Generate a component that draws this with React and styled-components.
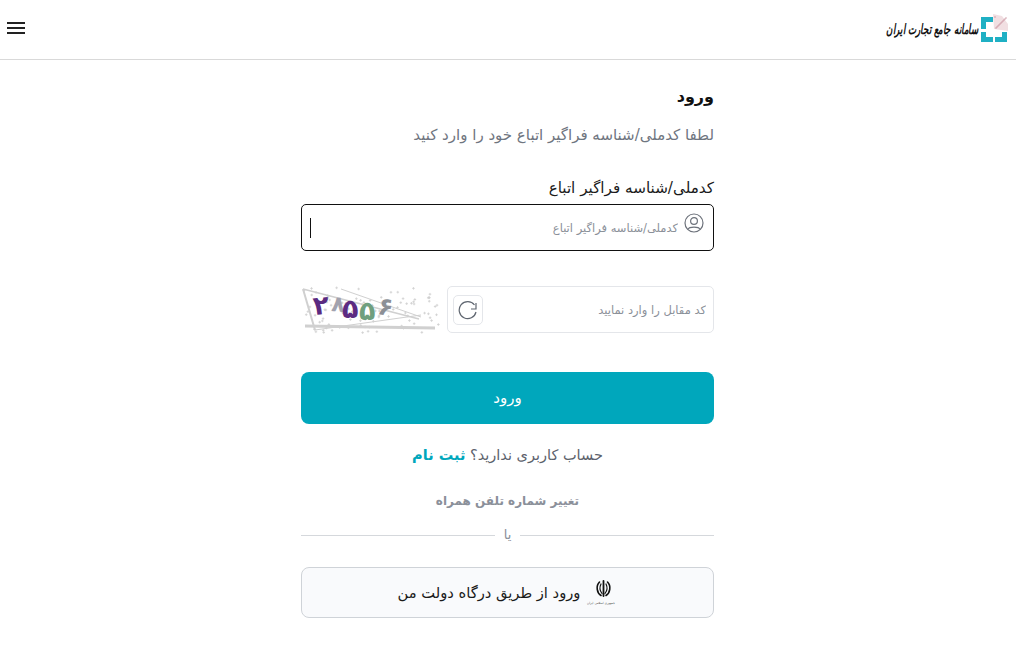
import React from 'react';
import styled, { createGlobalStyle } from 'styled-components';

const GlobalStyle = createGlobalStyle`
  html, body { margin: 0; padding: 0; background: #fff; }
  body { font-family: "DejaVu Sans", "Noto Sans", sans-serif; }
`;

const TEAL = '#00a7bc';

const hash = (n) => {
  const v = Math.sin(n * 12.9898) * 43758.5453;
  return v - Math.floor(v);
};

// pseudo random plus marks for the captcha noise
const noise = Array.from({ length: 110 }, (_, i) => ({
  x: 3 + hash(i + 1) * 135,
  y: 2 + hash(i + 200) * 46,
}));

const digits = [
  { ch: '۲', x: 13, y: 30, size: 26, fill: '#5a2a80', rot: -6 },
  { ch: '۸', x: 30, y: 26, size: 22, fill: '#a2a2ae', rot: 4 },
  { ch: '۵', x: 41, y: 33, size: 27, fill: '#5c2b82', rot: 0 },
  { ch: '۵', x: 58, y: 35, size: 27, fill: '#6f9f7e', rot: 0 },
  { ch: '۶', x: 76, y: 29, size: 25, fill: '#8c9096', rot: 8 },
];

const Page = styled.div`
  width: 1016px;
  height: 662px;
  overflow: hidden;
  display: flex;
  flex-direction: column;
  direction: rtl;
`;

const Header = styled.header`
  height: 59px;
  flex: none;
  display: flex;
  align-items: center;
  justify-content: space-between;
  border-bottom: 1px solid #d9d9d9;
  padding: 0 7px;
`;

const Brand = styled.div`
  display: flex;
  align-items: center;
  gap: 1px;
  margin-top: -1px;
`;

const BrandName = styled.span`
  display: block;
  width: 92px;
  font-family: "DejaVu Serif", serif;
  font-size: 14px;
  font-style: italic;
  font-weight: 700;
  line-height: 24px;
  color: #111;
  white-space: nowrap;
  transform: scaleX(0.62);
  transform-origin: right center;
`;

const MenuButton = styled.button`
  border: 0;
  background: none;
  padding: 0;
  width: 18px;
  height: 12px;
  margin-top: -3px;
  display: flex;
  flex-direction: column;
  justify-content: space-between;
  span { display: block; height: 2px; background: #222; }
`;

const Form = styled.main`
  width: 413px;
  margin: 0 302px 0 auto;
  display: flex;
  flex-direction: column;
`;

const Title = styled.h1`
  margin: 25px 0 0;
  font-size: 16px;
  line-height: 24px;
  font-weight: 700;
  color: #111;
`;

const Subtitle = styled.p`
  margin: 16px 0 0;
  font-size: 15px;
  line-height: 20px;
  color: #6f7580;
`;

const Label = styled.label`
  margin-top: 33px;
  font-size: 15.2px;
  line-height: 20px;
  color: #1a1a1a;
`;

const InputBox = styled.div`
  position: relative;
  margin-top: 6px;
  height: 47px;
  box-sizing: border-box;
  border: 1px solid #111;
  border-radius: 5px;
  display: flex;
  align-items: center;
  gap: 6px;
  padding: 0 9px 0 0;
`;

const UserIcon = styled.svg`
  flex: none;
  margin-top: -9px;
`;

const Field = styled.input`
  flex: 1;
  min-width: 0;
  border: 0;
  outline: 0;
  background: none;
  font: inherit;
  font-size: 11.5px;
  padding: 0;
  direction: rtl;
  &::placeholder { color: #8b9099; opacity: 1; }
`;

const Caret = styled.i`
  position: absolute;
  left: 8px;
  top: 13px;
  width: 1px;
  height: 20px;
  background: #111;
`;

const CaptchaRow = styled.div`
  margin-top: 35px;
  display: flex;
  gap: 6px;
`;

const CaptchaInput = styled.div`
  flex: 1;
  height: 47px;
  box-sizing: border-box;
  border: 1px solid #e4e6ea;
  border-radius: 5px;
  display: flex;
  align-items: center;
  padding: 0 7px 0 5px;
  gap: 6px;
`;

const RefreshButton = styled.button`
  width: 30px;
  height: 30px;
  flex: none;
  border: 1px solid #e4e6ea;
  border-radius: 5px;
  background: #fff;
  padding: 0;
  display: flex;
  align-items: center;
  justify-content: center;
`;

const Captcha = styled.svg`
  width: 140px;
  height: 50px;
  flex: none;
  margin-top: -1px;
`;

const Submit = styled.button`
  margin-top: 37px;
  height: 52px;
  border: 0;
  border-radius: 8px;
  background: ${TEAL};
  color: #fff;
  font: inherit;
  font-size: 15px;
  font-weight: 500;
`;

const SignupLine = styled.p`
  margin: 21px 0 0;
  text-align: center;
  font-size: 14.5px;
  line-height: 20px;
  color: #5c626c;
  a { color: ${TEAL}; font-weight: 700; text-decoration: none; }
`;

const ChangePhone = styled.a`
  margin-top: 27px;
  text-align: center;
  font-size: 12px;
  line-height: 18px;
  font-weight: 700;
  color: #8b909a;
`;

const Divider = styled.div`
  margin-top: 16px;
  display: flex;
  align-items: center;
  gap: 9px;
  font-size: 13px;
  line-height: 18px;
  color: #8b909a;
  &::before, &::after { content: ""; flex: 1; height: 1px; background: #d5d8dc; }
`;

const GovButton = styled.button`
  margin-top: 23px;
  height: 51px;
  border: 1px solid #cfd3d8;
  border-radius: 8px;
  background: #f9fafc;
  color: #1a1a1a;
  font: inherit;
  font-size: 14.7px;
  display: flex;
  align-items: center;
  justify-content: center;
`;

const BrandMark = () => (
  <svg width="30" height="30" viewBox="0 0 30 30">
    <path d="M14 0 L23 2 L29 10 L29 17 L15 15 Z" fill="#f1dfe2" />
    <g fill="#c58c9a">
      {[0, 1, 2, 3, 4, 5, 6, 7, 8, 9, 10, 11].map((i) => (
        <circle key={i} cx={16 + (i * 7) % 12} cy={3 + (i * 5) % 12} r="0.7" />
      ))}
    </g>
    <path d="M2 3 H14 V8 H7 V15 H2 Z M2 18 H7 V23 H14 V28 H2 Z M28 18 V28 H16 V23 H23 V18 Z" fill="#1fb0c4" />
  </svg>
);

const Emblem = () => (
  <svg width="37" height="30" viewBox="0 0 37 30">
    <g fill="none" stroke="#111" strokeLinecap="round">
      <path d="M23.5 3 V18" strokeWidth="1.8" />
      <path d="M21 6 C19.5 9 20 13 22 15.5" strokeWidth="1.2" />
      <path d="M26 6 C27.5 9 27 13 25 15.5" strokeWidth="1.2" />
      <path d="M19.5 4 C15.5 8 17 15 21 17.5" strokeWidth="1.6" />
      <path d="M27.5 4 C31.5 8 30 15 26 17.5" strokeWidth="1.6" />
    </g>
    <text x="21" y="26" textAnchor="middle" direction="rtl" fontFamily="DejaVu Sans" fontSize="3" fill="#444">
      جمهوری اسلامی ایران
    </text>
  </svg>
);

const App = () => (
  <>
    <GlobalStyle />
    <Page>
      <Header>
        <Brand>
          <BrandMark />
          <BrandName>سامانه جامع تجارت ایران</BrandName>
        </Brand>
        <MenuButton aria-label="menu">
          <span />
          <span />
          <span />
        </MenuButton>
      </Header>
      <Form>
        <Title>ورود</Title>
        <Subtitle>لطفا کدملی/شناسه فراگیر اتباع خود را وارد کنید</Subtitle>
        <Label>کدملی/شناسه فراگیر اتباع</Label>
        <InputBox>
          <UserIcon width="20" height="20" viewBox="0 0 20 20" fill="none" stroke="#6d727b" strokeWidth="1.2">
            <circle cx="10" cy="10" r="9" />
            <circle cx="10" cy="8" r="3.4" />
            <path d="M4 16.2 C5.2 13.4 14.8 13.4 16 16.2" />
          </UserIcon>
          <Field placeholder="کدملی/شناسه فراگیر اتباع" />
          <Caret />
        </InputBox>
        <CaptchaRow>
          <CaptchaInput>
            <Field placeholder="کد مقابل را وارد نمایید" />
            <RefreshButton aria-label="refresh">
              <svg width="20" height="20" viewBox="0 0 20 20" fill="none" stroke="#5f6670" strokeWidth="1.2">
                <path d="M18 12 A8.5 8.5 0 1 1 16.5 5" />
                <path d="M18 3 V9 H13" />
              </svg>
            </RefreshButton>
          </CaptchaInput>
          <Captcha viewBox="0 0 140 50">
            <g stroke="#cfcfcf" strokeWidth="0.8">
              {noise.map((n, i) => (
                <path key={i} d={`M${n.x - 1.3} ${n.y} h2.6 M${n.x} ${n.y - 1.3} v2.6`} />
              ))}
            </g>
            <g fill="none" stroke="#d0d0d0">
              <path d="M2 4 L14 45" strokeWidth="2" />
              <path d="M2 4 L118 34" strokeWidth="1.6" />
              <path d="M14 45 L120 30" strokeWidth="1.2" />
              <path d="M4 41 L134 43" strokeWidth="3" />
              <path d="M40 4 L120 32" strokeWidth="1" />
            </g>
            {digits.map((d, i) => (
              <text
                key={i}
                x={d.x}
                y={d.y}
                direction="ltr"
                fontFamily="DejaVu Sans"
                fontSize={d.size}
                fontWeight="700"
                fill={d.fill}
                transform={`rotate(${d.rot} ${d.x} ${d.y})`}
              >
                {d.ch}
              </text>
            ))}
          </Captcha>
        </CaptchaRow>
        <Submit>ورود</Submit>
        <SignupLine>
          حساب کاربری ندارید؟ <a href="#signup">ثبت نام</a>
        </SignupLine>
        <ChangePhone>تغییر شماره تلفن همراه</ChangePhone>
        <Divider>یا</Divider>
        <GovButton>
          <Emblem />
          ورود از طریق درگاه دولت من
        </GovButton>
      </Form>
    </Page>
  </>
);

export default App;
